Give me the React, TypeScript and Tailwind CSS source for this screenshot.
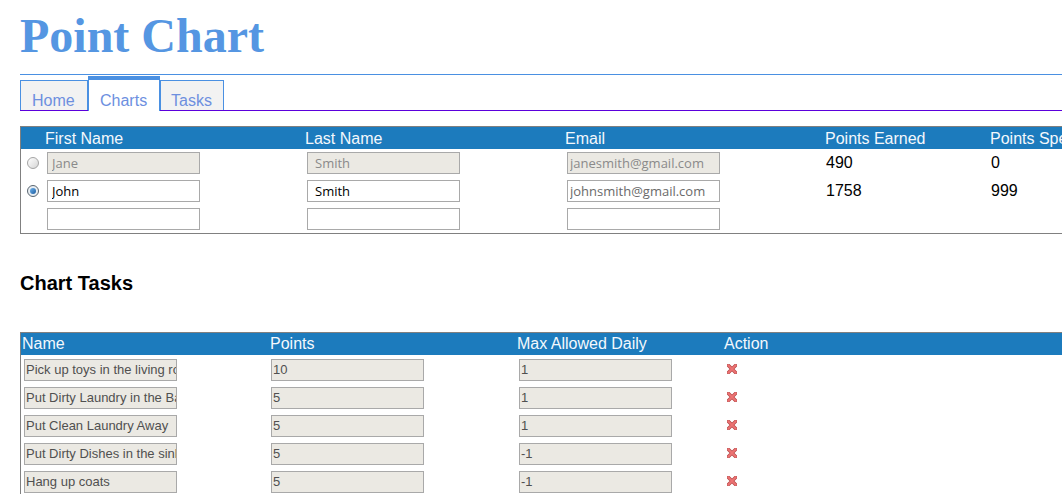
const people = [
  { first: "Jane", last: "Smith", email: "janesmith@gmail.com", earned: "490", spent: "0", locked: true, checked: false },
  { first: "John", last: "Smith", email: "johnsmith@gmail.com", earned: "1758", spent: "999", locked: false, checked: true },
  { first: "", last: "", email: "", earned: "", spent: "", locked: false, checked: false, blank: true },
];

const tasks = [
  { name: "Pick up toys in the living room", points: "10", max: "1" },
  { name: "Put Dirty Laundry in the Basket", points: "5", max: "1" },
  { name: "Put Clean Laundry Away", points: "5", max: "1" },
  { name: "Put Dirty Dishes in the sink", points: "5", max: "-1" },
  { name: "Hang up coats", points: "5", max: "-1" },
];

const Radio = ({ checked }: { checked: boolean }) => (
  <span
    className={
      "ml-[6px] flex h-[12px] w-[12px] items-center justify-center rounded-full border " +
      (checked
        ? "border-[#5b6670] bg-[#e8eef3]"
        : "border-[#a4a4a4] bg-gradient-to-br from-[#ffffff] to-[#d6d6d6]")
    }
  >
    {checked && (
      <span className="h-[6px] w-[6px] rounded-full bg-gradient-to-br from-[#6fb4ef] to-[#1a5c9e]" />
    )}
  </span>
);

const PersonInput = ({
  value,
  locked,
  dim,
  pad,
}: {
  value: string;
  locked: boolean;
  dim?: boolean;
  pad: string;
}) => (
  <input
    readOnly
    defaultValue={value}
    className={
      "ml-[2px] h-[22px] w-[153px] border border-[#a9a9a9] font-['Open_Sans',sans-serif] text-[13px] leading-[20px] outline-none " +
      pad +
      " " +
      (locked
        ? "bg-[#ebe9e3] text-[#8a8a8a]"
        : dim
          ? "bg-white text-[#6a6a6a]"
          : "bg-white text-black")
    }
  />
);

const TaskInput = ({ value, ml }: { value: string; ml: string }) => (
  <input
    readOnly
    defaultValue={value}
    className={
      "h-[22px] w-[153px] border border-[#a9a9a9] bg-[#ebe9e3] pl-px font-['Liberation_Sans',Arial,sans-serif] text-[13px] leading-[20px] text-[#505050] outline-none " +
      ml
    }
  />
);

const RemoveIcon = () => (
  <svg width="10" height="10" viewBox="0 0 10 10" className="ml-[3px]">
    <path d="M1.5 1.5 L8.5 8.5 M8.5 1.5 L1.5 8.5" stroke="#b84a4a" strokeWidth="3.4" strokeLinecap="square" />
    <path d="M1.5 1.5 L8.5 8.5 M8.5 1.5 L1.5 8.5" stroke="#ec7373" strokeWidth="2" strokeLinecap="square" />
  </svg>
);

const App = () => {
  return (
    <div className="h-[494px] w-full overflow-hidden bg-white font-['Liberation_Sans',Arial,sans-serif]">
      <div className="w-[1200px] pl-5">
        <h1 className="pt-[12px] font-['Liberation_Serif','Times_New_Roman',serif] text-[48px] leading-[48px] font-bold text-[#5596e2]">
          Point Chart
        </h1>
        <div className="mt-[14px] h-px bg-[#4a90e2]" />

        {/* tabs */}
        <div className="flex h-[36px] items-end border-b border-[#5b00dc] text-[16px] leading-[20px] text-[#6d8fdf]">
          <div className="h-[30px] w-[68px] border-x border-t border-[#4a90e2] bg-[#f2f2f2] pt-[10px] pl-[11px]">
            Home
          </div>
          <div className="-mb-px h-[35px] w-[72px] border-x border-t-4 border-[#4a90e2] bg-white pt-[11px] pl-[11px]">
            Charts
          </div>
          <div className="h-[30px] w-[64px] border-x border-t border-[#4a90e2] bg-[#f2f2f2] pt-[10px] pl-[10px]">
            Tasks
          </div>
        </div>

        {/* people table */}
        <div className="mt-[15px] border-y border-l border-[#808080]">
          <div className="grid h-[22px] grid-cols-[24px_260px_260px_260px_165px_1fr] bg-[#1c7bbd] text-[16px] leading-[24px] text-[#f4f8fc]">
            <div />
            <div>First Name</div>
            <div>Last Name</div>
            <div>Email</div>
            <div>Points Earned</div>
            <div>Points Spent</div>
          </div>
          {people.map((p, i) => (
            <div
              key={i}
              className="grid h-[28px] grid-cols-[24px_260px_260px_260px_165px_1fr] items-center text-[16px] text-black"
            >
              <div>{!p.blank && <Radio checked={p.checked} />}</div>
              <div>
                <PersonInput value={p.first} locked={p.locked} pad="pl-[4px]" />
              </div>
              <div>
                <PersonInput value={p.last} locked={p.locked} pad="pl-[7px]" />
              </div>
              <div>
                <PersonInput value={p.email} locked={p.locked} dim pad="pl-[2px]" />
              </div>
              <div className="pl-px">{p.earned}</div>
              <div className="pl-px">{p.spent}</div>
            </div>
          ))}
        </div>

        <h3 className="mt-[38px] text-[20px] leading-[22px] font-bold text-black">Chart Tasks</h3>

        {/* tasks table */}
        <div className="mt-[38px] border-t border-l border-[#808080]">
          <div className="grid h-[22px] grid-cols-[248px_248px_207px_1fr] bg-[#1c7bbd] text-[16px] leading-[22px] text-[#f4f8fc]">
            <div className="pl-px">Name</div>
            <div className="pl-px">Points</div>
            <div>Max Allowed Daily</div>
            <div>Action</div>
          </div>
          {tasks.map((t) => (
            <div key={t.name} className="grid h-[28px] grid-cols-[248px_248px_207px_1fr] items-center">
              <div>
                <TaskInput value={t.name} ml="ml-[3px]" />
              </div>
              <div>
                <TaskInput value={t.points} ml="ml-[2px]" />
              </div>
              <div>
                <TaskInput value={t.max} ml="ml-[2px]" />
              </div>
              <div className="flex items-center">
                <RemoveIcon />
              </div>
            </div>
          ))}
        </div>
      </div>
    </div>
  );
};

export default App;
